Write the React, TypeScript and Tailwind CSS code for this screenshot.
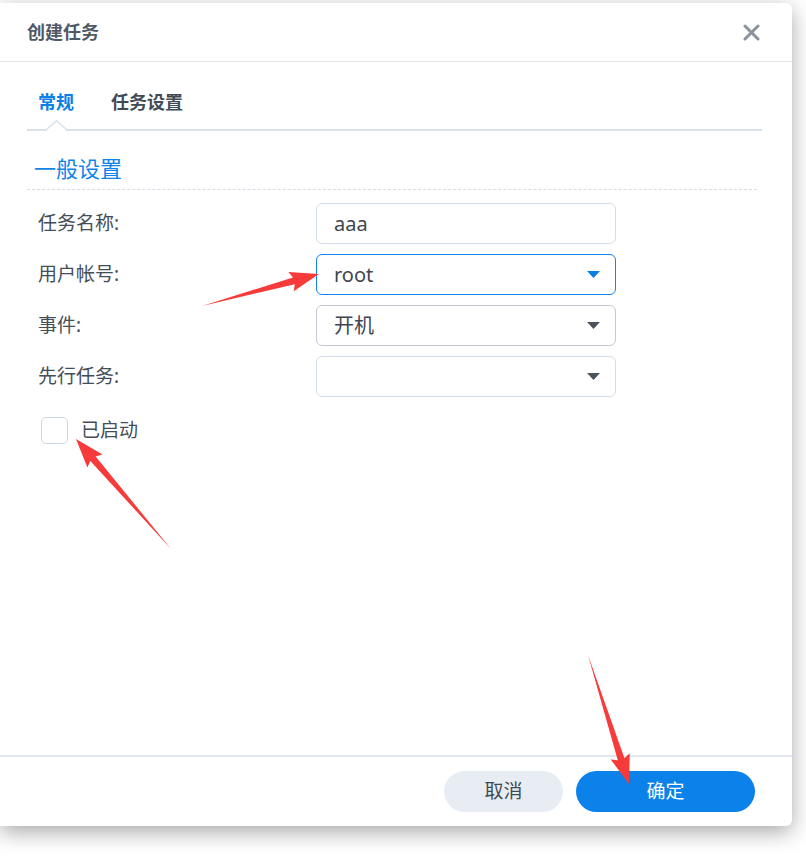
import React from "react"

const font = { fontFamily: '"Noto Sans", "Noto Sans CJK SC", sans-serif' }

type Pt = [number, number]

function arrowPoints(tail: Pt, tip: Pt, head = 26, half = 10, shaft = 3.5) {
  const dx = tip[0] - tail[0]
  const dy = tip[1] - tail[1]
  const len = Math.hypot(dx, dy)
  const ux = dx / len
  const uy = dy / len
  const nx = -uy
  const ny = ux
  const bx = tip[0] - ux * head
  const by = tip[1] - uy * head
  const pts: Pt[] = [
    tail,
    [bx + nx * shaft, by + ny * shaft],
    [bx + nx * half - ux * 3, by + ny * half - uy * 3],
    tip,
    [bx - nx * half - ux * 3, by - ny * half - uy * 3],
    [bx - nx * shaft, by - ny * shaft],
  ]
  return pts.map((p) => p.join(",")).join(" ")
}

function Caret({ blue }: { blue?: boolean }) {
  return (
    <svg width="13" height="7" viewBox="0 0 13 7" className="shrink-0">
      <path d="M0 0 L13 0 L6.5 7 Z" fill={blue ? "#0a7fe6" : "#4b535c"} />
    </svg>
  )
}

function Row({ label, children }: { label: string; children: React.ReactNode }) {
  return (
    <div className="flex items-center h-[41px]">
      <div className="w-[289px] pl-[11px] text-[19px] text-[#444e59]">{label}</div>
      {children}
    </div>
  )
}

export default function App() {
  const fields = [
    { label: "任务名称:", value: "aaa", select: false, border: "border-[#d5dee8]" },
    { label: "用户帐号:", value: "root", select: true, blue: true, border: "border-[#1484e8]" },
    { label: "事件:", value: "开机", select: true, border: "border-[#c3c9d1]" },
    { label: "先行任务:", value: "", select: true, border: "border-[#d5dee8]" },
  ]

  return (
    <div className="relative w-[806px] h-[859px] bg-white overflow-hidden" style={font}>
      <div className="mt-[3px] w-[792px] h-[823px] bg-white rounded-br-[6px] rounded-tr-[6px] shadow-[0_6px_22px_rgba(0,0,0,0.35)] flex flex-col">
        {/* header */}
        <div className="h-[59px] shrink-0 flex items-center justify-between pl-[27px] pr-[32px] border-b border-[#e3e7ec]">
          <span className="text-[18px] font-semibold text-[#4f5965]">创建任务</span>
          <svg width="17" height="17" viewBox="0 0 17 17">
            <path d="M2 2 L15 15 M15 2 L2 15" stroke="#8a929b" strokeWidth="3" strokeLinecap="round" />
          </svg>
        </div>

        {/* body */}
        <div className="flex-1 px-[27px] pr-[30px]">
          <div className="relative flex items-end h-[69px] border-b-2 border-[#d8e1ea] w-[735px]">
            <div className="pl-[11px] pr-[37px] pb-[13px] text-[18px] font-bold text-[#0a80e8]">常规</div>
            <div className="pb-[13px] text-[18px] font-bold text-[#414b56]">任务设置</div>
            <svg className="absolute left-[19px] -bottom-[2px]" width="21" height="11" viewBox="0 0 21 11">
              <path d="M0 10 L10.5 0.8 L21 10" fill="white" stroke="#d8e1ea" strokeWidth="1.5" />
              <rect x="1.5" y="9.2" width="18" height="3" fill="white" />
            </svg>
          </div>

          <div className="h-[59px] flex items-center pl-[7px] pt-[16px] border-b border-dashed border-[#d3dde8] w-[730px]">
            <span className="text-[22px] text-[#1283e6]">一般设置</span>
          </div>

          <div className="flex flex-col gap-[10px] pt-[13px]">
            {fields.map((f) => (
              <Row key={f.label} label={f.label}>
                <div
                  className={`w-[300px] h-[41px] rounded-[6px] border ${f.border} flex items-center justify-between pl-[17px] pr-[15px]`}
                >
                  <span className="text-[20px] text-[#3e4650]">{f.value}</span>
                  {f.select && <Caret blue={f.blue} />}
                </div>
              </Row>
            ))}
          </div>

          <div className="flex items-center gap-[13px] mt-[19px] pl-[14px]">
            <div className="w-[27px] h-[27px] rounded-[5px] border border-[#cbd6e1] bg-white" />
            <span className="text-[19px] text-[#444e59]">已启动</span>
          </div>
        </div>

        {/* footer */}
        <div className="h-[71px] shrink-0 border-t-2 border-[#e2e8ef] flex items-center justify-end gap-[13px] pr-[37px]">
          <button className="w-[119px] h-[41px] rounded-full bg-[#e8edf4] text-[19px] text-[#414b56]">取消</button>
          <button className="w-[179px] h-[41px] rounded-full bg-[#0a82ea] text-[19px] text-white">确定</button>
        </div>
      </div>

      {/* annotation arrows */}
      <svg className="absolute inset-0 pointer-events-none" width="806" height="859">
        <polygon points={arrowPoints([202, 306], [319, 274])} fill="#f73a3a" />
        <polygon points={arrowPoints([171, 549], [76, 439])} fill="#f73a3a" />
        <polygon points={arrowPoints([588, 655], [629, 784])} fill="#f73a3a" />
      </svg>
    </div>
  )
}
